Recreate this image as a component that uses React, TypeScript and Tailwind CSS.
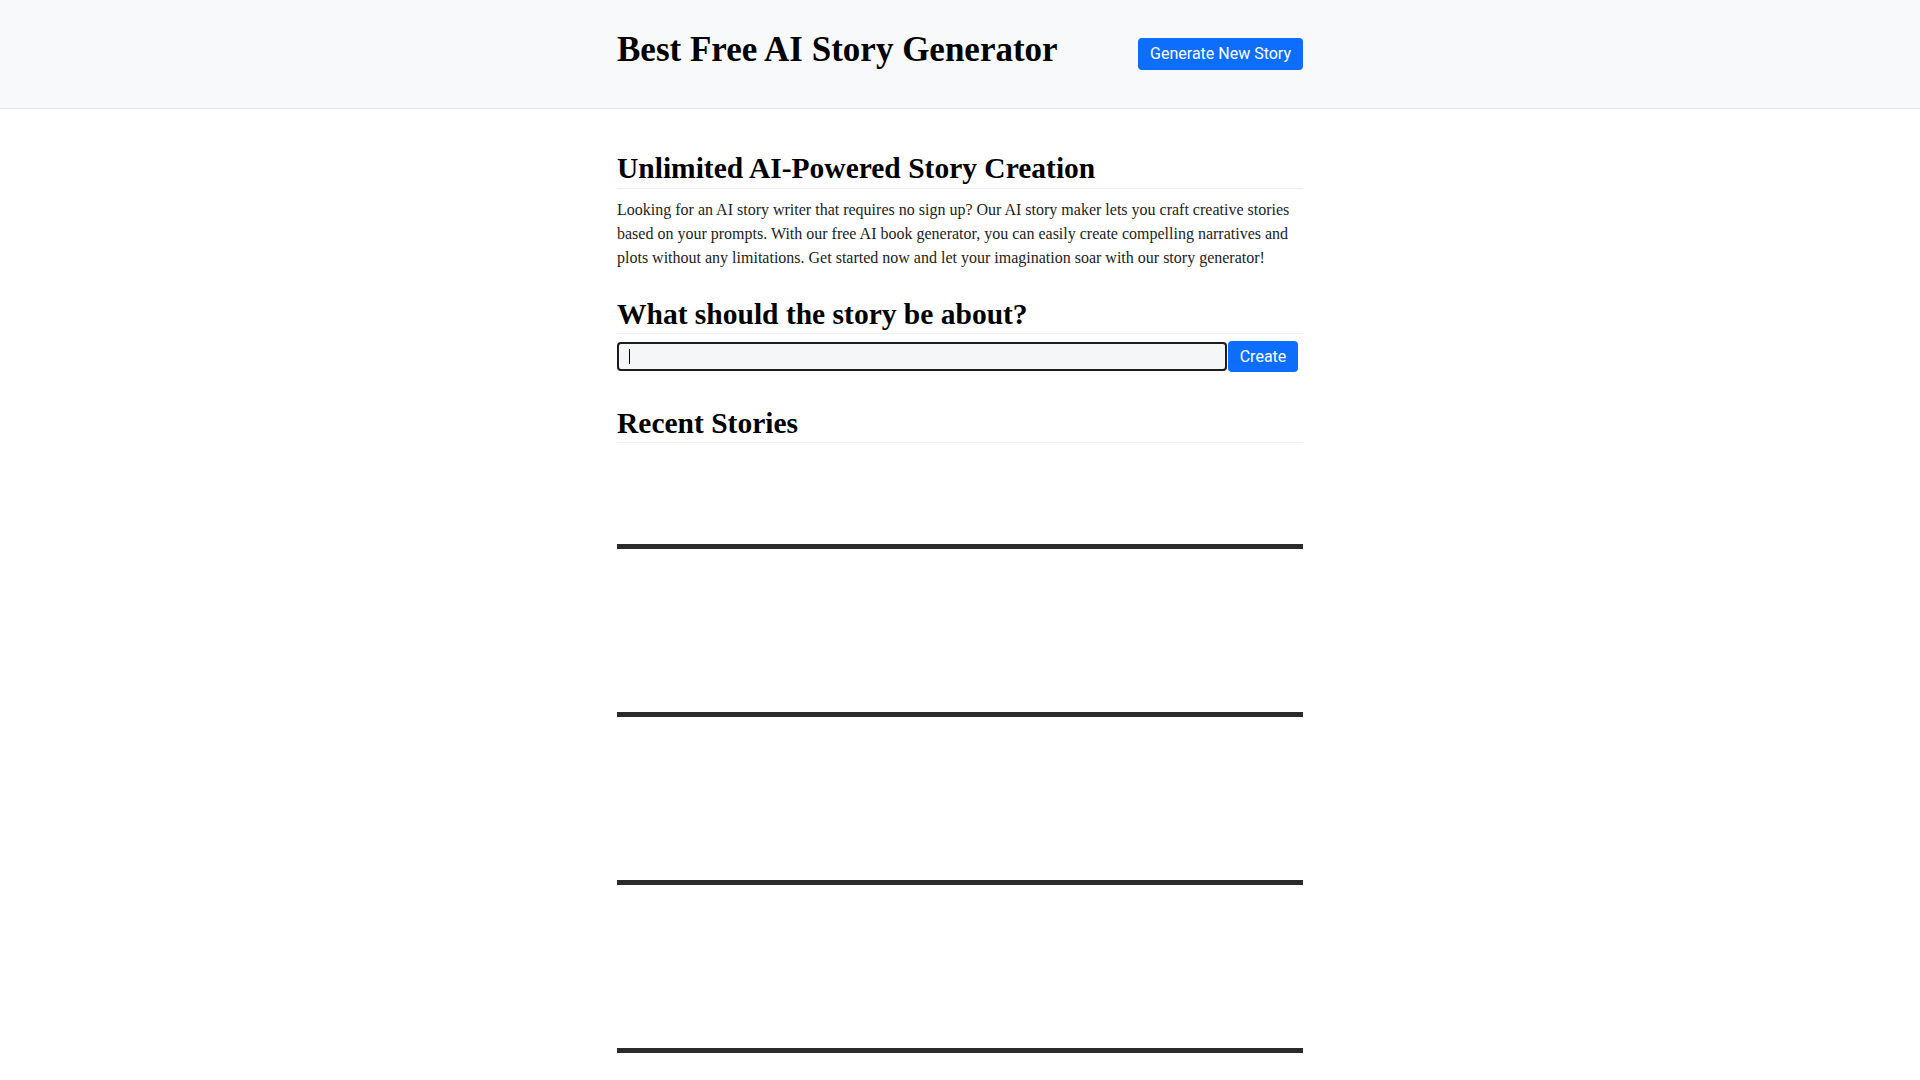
import React, { useState } from "react";

const serif = "font-['Liberation_Serif','Times_New_Roman',serif]";
const sans = "font-['Roboto','Liberation_Sans',sans-serif]";

export default function App() {
  const [prompt, setPrompt] = useState("");
  const stories = [0, 1, 2, 3];

  return (
    <div className={`min-h-screen bg-white text-black ${serif}`}>
      {/* HEADER */}
      <header className="h-[109px] border-b border-[#e3e5e8] bg-[#f8f9fa]">
        <div className="mx-auto flex w-[686px] items-start justify-between">
          <h1 className="mt-[32px] text-[35px] font-bold leading-none">Best Free AI Story Generator</h1>
          <button
            className={`mt-[38px] h-[32px] rounded-[4px] bg-[#0d6efd] px-[12px] text-[16px] leading-none text-white ${sans}`}
          >
            Generate New Story
          </button>
        </div>
      </header>

      <main className="mx-auto w-[686px]">
        {/* INTRO */}
        <h2 className="mt-[42px] border-b border-[#efefef] pb-[2px] text-[29.5px] font-bold leading-[35px]">
          Unlimited AI-Powered Story Creation
        </h2>
        <p className="mt-[9px] text-[16px] leading-[24px] text-[#222]">
          Looking for an AI story writer that requires no sign up? Our AI story maker lets you craft creative stories
          based on your prompts. With our free AI book generator, you can easily create compelling narratives and
          plots without any limitations. Get started now and let your imagination soar with our story generator!
        </p>

        {/* PROMPT FORM */}
        <h2 className="mt-[27px] border-b border-[#efefef] pb-[1px] text-[29.5px] font-bold leading-[35px]">
          What should the story be about?
        </h2>
        <form className="mt-[7px] flex items-center" onSubmit={(e) => e.preventDefault()}>
          <div className="relative w-[610px]">
            <input
              value={prompt}
              onChange={(e) => setPrompt(e.target.value)}
              className={`h-[29px] w-full rounded-[4px] border-2 border-[#1c1c1c] bg-[#f5f6f8] px-[10px] text-[15px] outline-none ${sans}`}
            />
            {prompt === "" && (
              <span className="pointer-events-none absolute left-[12px] top-[7px] h-[15px] w-px bg-black" />
            )}
          </div>
          <button
            type="submit"
            className={`ml-px h-[31px] w-[70px] rounded-[4px] bg-[#0d6efd] text-[16px] leading-none text-white ${sans}`}
          >
            Create
          </button>
        </form>

        {/* RECENT STORIES */}
        <h2 className="mt-[34px] border-b border-[#efefef] pb-[1px] text-[29.5px] font-bold leading-[35px]">
          Recent Stories
        </h2>
        <ul>
          {stories.map((s, i) => (
            <li key={s} className={i === 0 ? "pt-[101px]" : "pt-[163px]"}>
              <hr className="h-[5px] border-0 bg-[#2b2b2b]" />
            </li>
          ))}
        </ul>
      </main>
    </div>
  );
}
